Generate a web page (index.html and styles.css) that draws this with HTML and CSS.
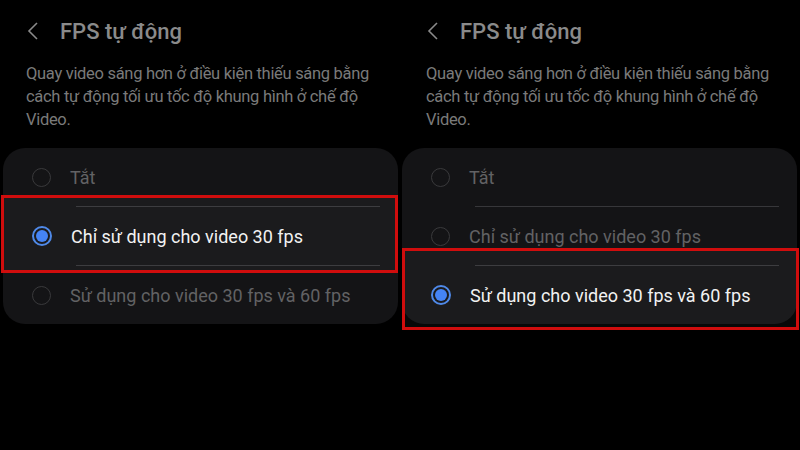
FILE: index.html
```html
<!DOCTYPE html>
<html lang="vi">
<head>
    <meta charset="UTF-8">
    <meta name="viewport" content="width=device-width, initial-scale=1.0">
    <title>FPS tự động</title>
    <link rel="stylesheet" href="styles.css">
</head>
<body>
    <div class="screens">
        <div class="panel">
            <div class="header">
                <svg class="back" width="12" height="18" viewBox="0 0 12 18"><path d="M10 1 L2 9 L10 17" fill="none" stroke="#8a8a8a" stroke-width="1.6"/></svg>
                <span class="title">FPS tự động</span>
            </div>
            <p class="desc">Quay video sáng hơn ở điều kiện thiếu sáng bằng cách tự động tối ưu tốc độ khung hình ở chế độ Video.</p>
            <div class="card">
                <div class="option">
                    <span class="radio"></span>
                    <span class="label">Tắt</span>
                </div>
                <div class="divider"></div>
                <div class="option selected">
                    <span class="radio"></span>
                    <span class="label">Chỉ sử dụng cho video 30 fps</span>
                </div>
                <div class="divider"></div>
                <div class="option">
                    <span class="radio"></span>
                    <span class="label">Sử dụng cho video 30 fps và 60 fps</span>
                </div>
            </div>
            <div class="mark mark-left"></div>
        </div>

        <div class="panel">
            <div class="header">
                <svg class="back" width="12" height="18" viewBox="0 0 12 18"><path d="M10 1 L2 9 L10 17" fill="none" stroke="#8a8a8a" stroke-width="1.6"/></svg>
                <span class="title">FPS tự động</span>
            </div>
            <p class="desc">Quay video sáng hơn ở điều kiện thiếu sáng bằng cách tự động tối ưu tốc độ khung hình ở chế độ Video.</p>
            <div class="card">
                <div class="option">
                    <span class="radio"></span>
                    <span class="label">Tắt</span>
                </div>
                <div class="divider"></div>
                <div class="option">
                    <span class="radio"></span>
                    <span class="label">Chỉ sử dụng cho video 30 fps</span>
                </div>
                <div class="divider"></div>
                <div class="option selected">
                    <span class="radio"></span>
                    <span class="label">Sử dụng cho video 30 fps và 60 fps</span>
                </div>
            </div>
            <div class="mark mark-right"></div>
        </div>
    </div>
</body>
</html>
```

FILE: styles.css
```css
body {
    margin: 0;
    background-color: #000;
    font-family: Roboto, "Noto Sans", sans-serif;
    width: 800px;
    height: 450px;
    overflow: hidden;
}

.screens {
    display: flex;
}

.panel {
    position: relative;
    width: 400px;
}

.header {
    display: flex;
    align-items: center;
    height: 30px;
    margin-top: 16px;
    padding-left: 27px;
}

.back {
    margin-right: 21px;
}

.title {
    color: #8a8a8a;
    font-size: 22px;
    font-weight: 500;
}

.desc {
    margin: 16px 0 0 26px;
    width: 350px;
    color: #7a7a7a;
    font-size: 16.5px;
    letter-spacing: -0.3px;
    line-height: 23px;
}

.card {
    margin: 17px 2px 0 3px;
    background-color: #141416;
    border-radius: 22px;
    overflow: hidden;
}

.panel + .panel .card {
    margin: 17px 3px 0 2px;
}

.option {
    display: flex;
    align-items: center;
    height: 58px;
    padding-left: 29px;
}

.radio {
    width: 17px;
    height: 17px;
    border: 1.5px solid #3a3a3c;
    border-radius: 50%;
    margin-right: 19px;
    flex-shrink: 0;
}

.label {
    color: #626264;
    font-size: 18px;
}

.selected .radio {
    position: relative;
    border: 2px solid #4a86e8;
    width: 16px;
    height: 16px;
}

.selected .radio::after {
    content: "";
    position: absolute;
    left: 2px;
    top: 2px;
    width: 12px;
    height: 12px;
    border-radius: 50%;
    background-color: #3f80f5;
}

.selected .label {
    color: #f2f2f2;
}

.divider {
    height: 1px;
    margin: 0 18px 0 73px;
    background-color: #37373a;
}

.mark {
    position: absolute;
    border: 3px solid #d00d0d;
    background-color: rgba(255, 255, 255, 0.03);
}

.mark-left {
    left: 1px;
    top: 195px;
    width: 391px;
    height: 72px;
}

.mark-right {
    left: 2px;
    top: 248px;
    width: 391px;
    height: 76px;
}
```
